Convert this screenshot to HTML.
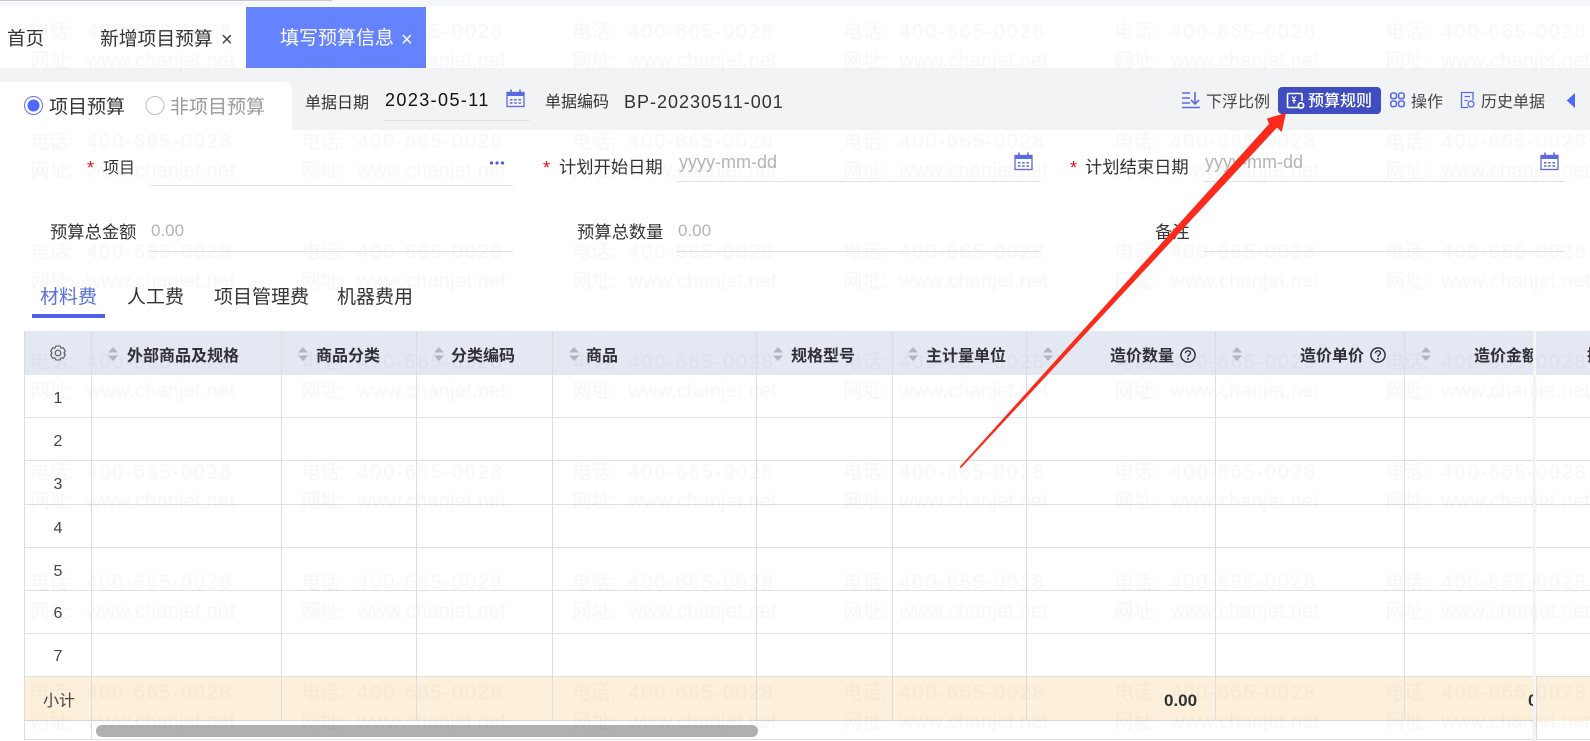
<!DOCTYPE html>
<html lang="zh-CN">
<head>
<meta charset="utf-8">
<title>填写预算信息</title>
<style>
html,body{margin:0;padding:0;width:1590px;height:741px;overflow:hidden;background:#fff}
body{position:relative;font-family:"Liberation Sans","Noto Sans CJK SC",sans-serif;color:#333}
.a{position:absolute}
.t{position:absolute;white-space:nowrap;line-height:24px;height:24px;font-size:16px;color:#333}
.h{font-weight:700;color:#2f3136;top:345px}
.n{left:38px;width:40px;text-align:center;font-size:16px;color:#444}
.lg{font-size:19px}
.l{font-size:16px}
.gr{color:#b4b4b4}
.red{color:#e0141c;font-size:18px}
svg{position:absolute;left:0;top:0;overflow:visible}
</style>
</head>
<body>
<!-- backgrounds -->
<div class="a" style="left:0;top:0;width:1590px;height:6px;background:#f6f7fb"></div>
<div class="a" style="left:0;top:0;width:332px;height:1px;background:#c9c9c9"></div>
<div class="a" style="left:246px;top:7px;width:180px;height:61px;background:#6583fe"></div>
<div class="a" style="left:0;top:68px;width:1590px;height:62px;background:#f2f3f5"></div>
<div class="a" style="left:0;top:82px;width:292px;height:48px;background:#fff;border-radius:0 8px 0 0"></div>
<div class="a" style="left:24px;top:331px;width:1566px;height:44px;background:#e4e8f3"></div>
<div class="a" style="left:24px;top:676px;width:1566px;height:45px;background:#fdf0da"></div>
<div class="a" style="left:1278px;top:87px;width:103px;height:27px;background:#3f4dc0;border-radius:4px"></div>

<!-- lines and icons -->
<svg width="1590" height="741" viewBox="0 0 1590 741">
<defs>
<g id="sort"><path d="M0 5.5L5 0L10 5.5Z M0 8.5L5 14L10 8.5Z" fill="#b3b6bd"/></g>
<g id="cal" fill="none" stroke="#5a6ae0">
<rect x="1" y="3.5" width="17" height="14" stroke-width="1.3"/>
<path d="M1 4H18V7H1Z" fill="#5a6ae0" stroke="none"/>
<path d="M5 0.5V5M14 0.5V5" stroke-width="1.6"/>
<path d="M4 10.8h2.5M8.2 10.8h2.5M12.5 10.8h2.5M4 14h2.5M8.2 14h2.5M12.5 14h2.5" stroke-width="1.5"/>
</g>
<g id="help"><circle cx="8" cy="8" r="7.1" fill="none" stroke="#2f3136" stroke-width="1.5"/><path d="M5.5 6.2C5.6 3 10.5 3.1 10.5 6C10.5 7.7 8 8 8 9.8" fill="none" stroke="#2f3136" stroke-width="1.4"/><circle cx="8" cy="11.9" r="1" fill="#2f3136"/></g>
</defs>
<g shape-rendering="crispEdges" fill="none" stroke-width="1">
<!-- form underlines -->
<path stroke="#e2e2e2" d="M383 120.5H530M150 185.5H513M677 181.5H1039M1204 181.5H1565M150 251.5H513M677 251.5H1039M1204 251.5H1565"/>
<!-- table rows -->
<path stroke="#e0e0e0" d="M24 417.5H1590M24 460.5H1590M24 504.5H1590M24 547.5H1590M24 590.5H1590M24 633.5H1590M24 676.5H1590M24 739.5H1590"/>
<path stroke="#d6d6d6" d="M24 720.5H1590"/>
<!-- table columns -->
<path stroke="#dddddf" d="M24.5 331V740M91.5 331V740M281.5 331V721M416.5 331V721M552.5 331V721M756.5 331V721M892.5 331V721M1026.5 331V721M1215.5 331V721M1404.5 331V721"/>
</g>
<!-- sort icons -->
<use href="#sort" x="108" y="347"/><use href="#sort" x="298" y="347"/><use href="#sort" x="434" y="347"/><use href="#sort" x="569" y="347"/><use href="#sort" x="773" y="347"/><use href="#sort" x="908" y="347"/><use href="#sort" x="1043" y="347"/><use href="#sort" x="1232" y="347"/><use href="#sort" x="1421" y="347"/>
<!-- help icons -->
<use href="#help" x="1180" y="347"/><use href="#help" x="1370" y="347"/>
<!-- gear -->
<g transform="translate(58 353)" fill="none" stroke="#555" stroke-width="1.1">
<path d="M-2 -7L2 -7L3 -5L5.4 -5.2L7.3 -1.8L6 0L7.3 1.8L5.4 5.2L3 5L2 7L-2 7L-3 5L-5.4 5.2L-7.3 1.8L-6 0L-7.3 -1.8L-5.4 -5.2L-3 -5Z"/>
<circle r="2.8"/>
</g>
<!-- calendars -->
<use href="#cal" x="506" y="89"/><use href="#cal" x="1014" y="152"/><use href="#cal" x="1540" y="152"/>
<!-- radios -->
<circle cx="33.5" cy="105.5" r="9" fill="#fff" stroke="#6070f0" stroke-width="1"/>
<circle cx="33.5" cy="105.5" r="6" fill="#4f68ff"/>
<circle cx="155" cy="105.5" r="9" fill="#fff" stroke="#bdbdbd" stroke-width="1"/>
<!-- dots -->
<g fill="#4a5fd8"><circle cx="491.5" cy="163" r="1.6"/><circle cx="497" cy="163" r="1.6"/><circle cx="502.5" cy="163" r="1.6"/></g>
<!-- tab underline -->
<rect x="32" y="314" width="73" height="4" fill="#4f62e8"/>
<!-- scrollbar -->
<rect x="96" y="725" width="662" height="12" rx="6" fill="#b0b0b0"/>
<!-- toolbar icons -->
<g fill="none" stroke="#5a6ae8" stroke-width="1.6">
<path d="M1182 93h8M1182 98h8M1182 103h8M1182 107.5h18M1195 92v12M1191 100l4 4 4-4"/>
<rect x="1390.8" y="93" width="5.6" height="5.6" rx="1.8"/><rect x="1398.6" y="93" width="5.6" height="5.6" rx="1.8"/><rect x="1390.8" y="101" width="5.6" height="5.6" rx="1.8"/><rect x="1398.6" y="101" width="5.6" height="5.6" rx="1.8"/>
<path d="M1473 100V92.5H1461.5V107.5H1468M1464.5 96.5h5.5M1464.5 100.5h3" stroke-width="1.3"/><circle cx="1471" cy="104" r="3" stroke-width="1.3"/>
</g>
<path d="M1575 93V108L1566.7 100.5Z" fill="#4f68f5"/>
<path d="M1299 107.5H1288.5C1287.9 107.5 1287.5 107.1 1287.5 106.5V94.5C1287.5 93.9 1287.9 93.5 1288.5 93.5H1301C1301.6 93.5 1302 93.9 1302 94.5V101" fill="none" stroke="#fff" stroke-width="1.6"/>
<path d="M1292 96.5l2 2 2-2M1294 98.5v5M1292 100.5h4" fill="none" stroke="#fff" stroke-width="1.2"/>
<circle cx="1301" cy="105.5" r="2.6" fill="none" stroke="#fff" stroke-width="1.8"/>
</svg>

<!-- header tabs -->
<span class="t" style="left:7px;top:27px;font-size:18.6px">首页</span>
<span class="t" style="left:100px;top:27px;font-size:18.8px">新增项目预算</span>
<span class="t" style="left:221px;top:28px;font-size:20px;color:#444">×</span>
<span class="t" style="left:280px;top:27px;font-size:19px;color:#fff">填写预算信息</span>
<span class="t" style="left:401px;top:28px;font-size:20px;color:#fff">×</span>

<!-- toolbar -->
<span class="t lg" style="left:49px;top:96px;color:#333">项目预算</span>
<span class="t lg" style="left:170px;top:96px;color:#9a9a9a">非项目预算</span>
<span class="t l" style="left:305px;top:92px">单据日期</span>
<span class="t" style="left:385px;top:88px;font-size:18px;letter-spacing:1.4px;color:#111">2023-05-11</span>
<span class="t l" style="left:545px;top:91px">单据编码</span>
<span class="t" style="left:624px;top:90px;font-size:18px;letter-spacing:1px;color:#333">BP-20230511-001</span>
<span class="t l" style="left:1206px;top:91px;color:#444">下浮比例</span>
<span class="t l" style="left:1308px;top:90px;color:#fff;font-weight:500">预算规则</span>
<span class="t l" style="left:1411px;top:91px;color:#444">操作</span>
<span class="t l" style="left:1481px;top:91px;color:#444">历史单据</span>

<!-- form -->
<span class="t red" style="left:87px;top:156px">*</span>
<span class="t l" style="left:103px;top:157px">项目</span>
<span class="t red" style="left:543px;top:156px">*</span>
<span class="t" style="left:559px;top:155px;font-size:17.3px">计划开始日期</span>
<span class="t gr" style="left:679px;top:150px;font-size:18px">yyyy-mm-dd</span>
<span class="t red" style="left:1070px;top:156px">*</span>
<span class="t" style="left:1085px;top:155px;font-size:17.3px">计划结束日期</span>
<span class="t gr" style="left:1205px;top:150px;font-size:18px">yyyy-mm-dd</span>
<span class="t" style="left:50px;top:220px;font-size:17.3px">预算总金额</span>
<span class="t gr" style="left:151px;top:219px;font-size:17px">0.00</span>
<span class="t" style="left:577px;top:220px;font-size:17.3px">预算总数量</span>
<span class="t gr" style="left:678px;top:219px;font-size:17px">0.00</span>
<span class="t" style="left:1155px;top:220px;font-size:17.3px">备注</span>

<!-- tabs -->
<span class="t lg" style="left:40px;top:286px;color:#5a6fe0">材料费</span>
<span class="t lg" style="left:127px;top:286px">人工费</span>
<span class="t lg" style="left:214px;top:286px">项目管理费</span>
<span class="t lg" style="left:337px;top:286px">机器费用</span>

<!-- table header -->
<span class="t h" style="left:127px">外部商品及规格</span>
<span class="t h" style="left:316px">商品分类</span>
<span class="t h" style="left:451px">分类编码</span>
<span class="t h" style="left:586px">商品</span>
<span class="t h" style="left:791px">规格型号</span>
<span class="t h" style="left:926px">主计量单位</span>
<span class="t h" style="left:1110px">造价数量</span>
<span class="t h" style="left:1300px">造价单价</span>
<div class="a" style="left:1440px;top:331px;width:93px;height:44px;overflow:hidden"><span class="t h" style="left:34px;top:14px">造价金额</span></div>

<!-- row numbers -->
<span class="t n" style="top:387px">1</span>
<span class="t n" style="top:430px">2</span>
<span class="t n" style="top:473px">3</span>
<span class="t n" style="top:517px">4</span>
<span class="t n" style="top:560px">5</span>
<span class="t n" style="top:602px">6</span>
<span class="t n" style="top:645px">7</span>
<span class="t" style="left:43px;top:690px;color:#444">小计</span>
<span class="t" style="left:1164px;top:689px;font-weight:700;font-size:17px;color:#2f3136">0.00</span>
<div class="a" style="left:1500px;top:676px;width:33px;height:45px;overflow:hidden"><span class="t" style="left:28px;top:13px;font-weight:700;font-size:17px;color:#2f3136">0.00</span></div>

<!-- fixed column -->
<div class="a" style="left:1533px;top:331px;width:57px;height:410px;overflow:hidden">
  <div class="a" style="left:0;top:0;width:4px;height:410px;background:linear-gradient(90deg,#f0f0f0,#fbfbfb)"></div>
  <div class="a" style="left:3px;top:0;width:54px;height:44px;background:#e4e8f3"></div>
  <div class="a" style="left:3px;top:44px;width:54px;height:301px;background:#fff"></div>
  <div class="a" style="left:3px;top:86px;width:54px;height:1px;background:#e0e0e0"></div>
  <div class="a" style="left:3px;top:129px;width:54px;height:1px;background:#e0e0e0"></div>
  <div class="a" style="left:3px;top:173px;width:54px;height:1px;background:#e0e0e0"></div>
  <div class="a" style="left:3px;top:216px;width:54px;height:1px;background:#e0e0e0"></div>
  <div class="a" style="left:3px;top:259px;width:54px;height:1px;background:#e0e0e0"></div>
  <div class="a" style="left:3px;top:302px;width:54px;height:1px;background:#e0e0e0"></div>
  <div class="a" style="left:3px;top:345px;width:54px;height:45px;background:#fdf0da;border-top:1px solid #dcdcdc;border-left:1px solid #dcdcdc;box-sizing:border-box"></div>
  <div class="a" style="left:3px;top:390px;width:54px;height:18px;background:#fff;border-left:1px solid #dcdcdc;box-sizing:border-box"></div>
  <div class="a" style="left:3px;top:408px;width:54px;height:1px;background:#e0e0e0"></div>
  <span class="t h" style="left:54px;top:14px">操作</span>
</div>

<!-- watermark -->
<svg width="1590" height="741" viewBox="0 0 1590 741" style="pointer-events:none">
<defs>
<pattern id="wm" patternUnits="userSpaceOnUse" x="30.4" y="16" width="271" height="110.17">
<g opacity=".038" fill="#3c465a" stroke="#3c465a" stroke-width=".4" font-family="'Liberation Sans','Noto Sans CJK SC',sans-serif" font-size="19">
<text x="0" y="22">电话:<tspan x="56" font-size="20" letter-spacing="1.8">400-665-0028</tspan></text>
<text x="0" y="51">网址:<tspan x="56" font-size="20" letter-spacing=".2">www.chanjet.net</tspan></text>
</g>
</pattern>
</defs>
<rect x="0" y="0" width="1590" height="741" fill="url(#wm)"/>
<!-- arrow -->
<path d="M959.5 467L1269 124L1267 118.5L1286 113L1281.7 132L1277 127.5L961 468Z" fill="#fb2a1a"/>
</svg>
</body>
</html>
